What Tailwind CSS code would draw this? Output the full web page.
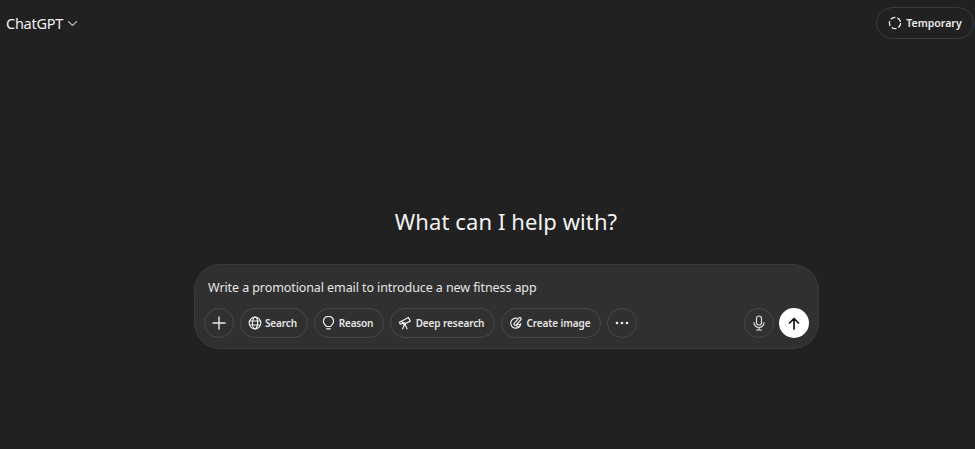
<!doctype html>
<html><head><meta charset="utf-8"><script src="https://cdn.jsdelivr.net/npm/@tailwindcss/browser@4"></script></head>
<body class="m-0 bg-[#212121]">
<div class="w-[975px] h-[449px] overflow-hidden bg-[#212121] text-white flex flex-col font-['Noto_Sans','Open_Sans',sans-serif]">
  <header class="h-[46px] flex items-start justify-between pl-[6px] pr-px pt-[7px] shrink-0">
    <div class="flex items-center gap-[4px] h-[32px]">
      <span class="text-[14.5px] leading-none text-[#f0f0f0] tracking-[-0.25px]">ChatGPT</span>
      <svg width="11" height="11" viewBox="0 0 12 12" fill="none" stroke="#b4b4b4" stroke-width="1.2" stroke-linecap="round" stroke-linejoin="round"><path d="M1.5 3.8 6 8.2l4.5-4.4"/></svg>
    </div>
    <div class="h-[32px] w-[98px] rounded-full border border-[#3a3a3a] flex items-center justify-center gap-[4px]">
      <svg width="14" height="14" viewBox="0 0 14 14" fill="none" stroke="#ececec" stroke-width="1.3"><circle cx="7" cy="7" r="5.6" stroke-dasharray="5 2.04"/></svg>
      <span class="text-[10.5px] font-semibold text-[#ececec] pt-px">Temporary</span>
    </div>
  </header>
  <main class="flex flex-col items-center pt-[157px] pl-[38px]">
    <h1 class="text-[22px] leading-[36px] font-normal text-[#f4f4f4] tracking-[0.1px] h-[36px] -ml-px">What can I help with?</h1>
    <div class="mt-[25px] w-[625px] h-[85px] rounded-[26px] bg-[#303030] border border-[#3a3a3a] pl-[9px] pr-[9px] flex flex-col">
      <div class="pl-[4px] pt-[13px] h-[43px] text-[12.5px] leading-[20px] text-[#e6e6e6] tracking-[-0.09px]">Write a promotional email to introduce a new fitness app</div>
      <div class="flex items-center gap-[6px]">
        <button class="w-[30px] h-[30px] rounded-full border border-[#474747] flex items-center justify-center">
          <svg width="14" height="14" viewBox="0 0 14 14" fill="none" stroke="#ececec" stroke-width="1.4" stroke-linecap="round"><path d="M7 1v12M1 7h12"/></svg>
        </button>
        <button class="h-[30px] w-[68px] rounded-full border border-[#474747] flex items-center justify-center gap-[3px] pr-[3px]">
          <svg width="14" height="14" viewBox="0 0 14 14" fill="none" stroke="#ececec" stroke-width="1.2"><circle cx="7" cy="7" r="5.8"/><ellipse cx="7" cy="7" rx="2.6" ry="5.8"/><path d="M1.2 5h11.600M1.2 9h11.600"/></svg>
          <span class="text-[10px] font-semibold text-[#e6e6e6] tracking-[-0.1px] pt-px">Search</span>
        </button>
        <button class="h-[30px] w-[70px] rounded-full border border-[#474747] flex items-center justify-center gap-[4px] pr-[3px]">
          <svg width="13" height="15" viewBox="0 0 13 15" fill="none" stroke="#ececec" stroke-width="1.2" stroke-linecap="round" stroke-linejoin="round"><path d="M4.3 10.5C3.8 9 1.4 8 1.4 5.4a5.1 5.1 0 0 1 10.2 0c0 2.6-2.4 3.600-2.900 5.100z"/><path d="M4.600 12.800h3.800"/></svg>
          <span class="text-[10px] font-semibold text-[#e6e6e6] tracking-[-0.2px] pt-px">Reason</span>
        </button>
        <button class="h-[30px] w-[105px] rounded-full border border-[#474747] flex items-center justify-center gap-[4px] pr-[3px]">
          <svg width="14" height="14" viewBox="0 0 14 14" fill="none" stroke="#ececec" stroke-width="1.2" stroke-linecap="round" stroke-linejoin="round"><path d="M3.500 5.200 10.300 1.400l2 3.700-6.600 3.400z"/><path d="M3.500 5.200 1.300 6.300l1 1.900 2.200-.9"/><path d="M6.500 8.300 4.600 12.800M7 8.200l2 4.600"/><circle cx="6.300" cy="7.600" r="1"/></svg>
          <span class="text-[10px] font-semibold text-[#e6e6e6] tracking-[-0.1px] pt-px">Deep research</span>
        </button>
        <button class="h-[30px] w-[100px] rounded-full border border-[#474747] flex items-center justify-center gap-[4px] pr-[3px]">
          <svg width="14" height="14" viewBox="0 0 14 14" fill="none" stroke="#ececec" stroke-width="1.2" stroke-linecap="round" stroke-linejoin="round"><path d="M8 2.300A5 5 0 1 0 11.700 7.500"/><path d="M8.500 3.700 5.200 7.300a1.300 1.300 0 0 0 1.800 1.800l5-5.600a1.300 1.300 0 0 0-1.800-1.800z"/><circle cx="9.300" cy="9.700" r="1.500"/></svg>
          <span class="text-[10px] font-semibold text-[#e6e6e6] tracking-[-0.1px] pt-px">Create image</span>
        </button>
        <button class="w-[30px] h-[30px] rounded-full border border-[#474747] flex items-center justify-center">
          <svg width="14" height="4" viewBox="0 0 14 4" fill="#ececec"><circle cx="2" cy="2" r="1.300"/><circle cx="7" cy="2" r="1.300"/><circle cx="12" cy="2" r="1.300"/></svg>
        </button>
        <div class="flex-1"></div>
        <button class="w-[30px] h-[30px] rounded-full border border-[#474747] flex items-center justify-center">
          <svg width="12" height="16" viewBox="0 0 12 16" fill="none" stroke="#dedede" stroke-width="1.200" stroke-linecap="round"><rect x="3.500" y="1" width="5" height="9" rx="2.500"/><path d="M1 7.500a5 5 0 0 0 10 0M6 12.500V15M3.500 15h5"/></svg>
        </button>
        <button class="w-[30px] h-[30px] -ml-px rounded-full bg-white flex items-center justify-center">
          <svg width="12" height="13" viewBox="0 0 12 13" fill="none" stroke="#111" stroke-width="1.700" stroke-linecap="round" stroke-linejoin="round"><path d="M6 12V1.500M1.500 6 6 1.500 10.500 6"/></svg>
        </button>
      </div>
    </div>
  </main>
</div>
</body></html>
